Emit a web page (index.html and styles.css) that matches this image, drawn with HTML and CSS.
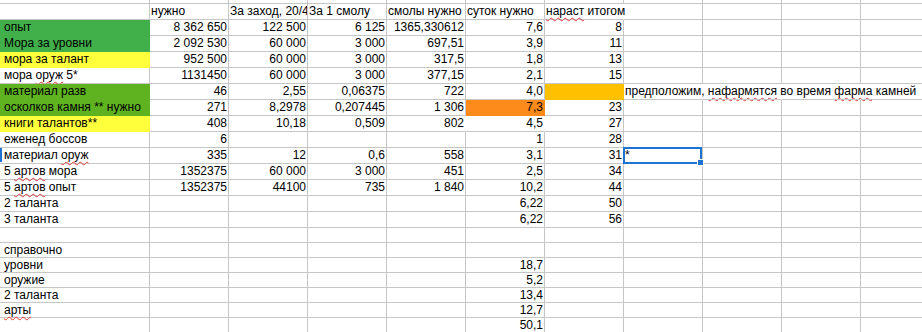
FILE: index.html
```html
<!DOCTYPE html>
<html lang="ru">
<head>
<meta charset="utf-8">
<title>Лист</title>
<link rel="stylesheet" href="styles.css">
</head>
<body>
<div class="sheet">
  <div class="row r0"><div class="c"></div><div class="c"></div><div class="c"></div><div class="c"></div><div class="c"></div><div class="c"></div><div class="c"></div><div class="c"></div><div class="c"></div><div class="c"></div><div class="c"></div><div class="c"></div></div>
  <div class="row"><div class="c a"></div><div class="c">нужно</div><div class="c clip">За заход, 20/40 смолы</div><div class="c">За 1 смолу</div><div class="c">смолы нужно</div><div class="c">суток нужно</div><div class="c nr"><span class="sp">нараст</span> итогом</div><div class="c"></div><div class="c"></div><div class="c"></div><div class="c"></div><div class="c"></div></div>
  <div class="row"><div class="c a g1">опыт</div><div class="c n">8 362 650</div><div class="c n">122 500</div><div class="c n">6 125</div><div class="c n">1365,330612</div><div class="c n">7,6</div><div class="c n">8</div><div class="c"></div><div class="c"></div><div class="c"></div><div class="c"></div><div class="c"></div></div>
  <div class="row"><div class="c a g1">Мора за уровни</div><div class="c n">2 092 530</div><div class="c n">60 000</div><div class="c n">3 000</div><div class="c n">697,51</div><div class="c n">3,9</div><div class="c n">11</div><div class="c"></div><div class="c"></div><div class="c"></div><div class="c"></div><div class="c"></div></div>
  <div class="row"><div class="c a y">мора за талант</div><div class="c n">952 500</div><div class="c n">60 000</div><div class="c n">3 000</div><div class="c n">317,5</div><div class="c n">1,8</div><div class="c n">13</div><div class="c"></div><div class="c"></div><div class="c"></div><div class="c"></div><div class="c"></div></div>
  <div class="row"><div class="c a">мора <span class="sp">оруж</span> 5*</div><div class="c n">1131450</div><div class="c n">60 000</div><div class="c n">3 000</div><div class="c n">377,15</div><div class="c n">2,1</div><div class="c n">15</div><div class="c"></div><div class="c"></div><div class="c"></div><div class="c"></div><div class="c"></div></div>
  <div class="row"><div class="c a g2">материал разв</div><div class="c n">46</div><div class="c n">2,55</div><div class="c n">0,06375</div><div class="c n">722</div><div class="c n">4,0</div><div class="c gold"></div><div class="c nr">предположим, <span class="sp">нафармятся</span> во время <span class="sp">фарма</span> камней</div><div class="c nr"></div><div class="c nr"></div><div class="c"></div><div class="c"></div></div>
  <div class="row"><div class="c a g2">осколков камня ** нужно</div><div class="c n">271</div><div class="c n">8,2978</div><div class="c n">0,207445</div><div class="c n">1 306</div><div class="c n or">7,3</div><div class="c n">23</div><div class="c"></div><div class="c"></div><div class="c"></div><div class="c"></div><div class="c"></div></div>
  <div class="row"><div class="c a y">книги талантов**</div><div class="c n">408</div><div class="c n">10,18</div><div class="c n">0,509</div><div class="c n wr">802</div><div class="c n wr">4,5</div><div class="c n">27</div><div class="c"></div><div class="c"></div><div class="c"></div><div class="c"></div><div class="c"></div></div>
  <div class="row"><div class="c a">еженед боссов</div><div class="c n">6</div><div class="c"></div><div class="c"></div><div class="c"></div><div class="c n">1</div><div class="c n">28</div><div class="c"></div><div class="c"></div><div class="c"></div><div class="c"></div><div class="c"></div></div>
  <div class="row"><div class="c a rowsel">материал <span class="sp">оруж</span></div><div class="c n">335</div><div class="c n">12</div><div class="c n">0,6</div><div class="c n">558</div><div class="c n">3,1</div><div class="c n">31</div><div class="c selcell">*<span class="sel"><span class="handle"></span></span></div><div class="c"></div><div class="c"></div><div class="c"></div><div class="c"></div></div>
  <div class="row"><div class="c a">5 <span class="sp">артов</span> мора</div><div class="c n">1352375</div><div class="c n">60 000</div><div class="c n">3 000</div><div class="c n">451</div><div class="c n">2,5</div><div class="c n">34</div><div class="c"></div><div class="c"></div><div class="c"></div><div class="c"></div><div class="c"></div></div>
  <div class="row"><div class="c a">5 <span class="sp">артов</span> опыт</div><div class="c n">1352375</div><div class="c n">44100</div><div class="c n">735</div><div class="c n">1 840</div><div class="c n">10,2</div><div class="c n">44</div><div class="c"></div><div class="c"></div><div class="c"></div><div class="c"></div><div class="c"></div></div>
  <div class="row"><div class="c a">2 таланта</div><div class="c"></div><div class="c"></div><div class="c"></div><div class="c"></div><div class="c n">6,22</div><div class="c n">50</div><div class="c"></div><div class="c"></div><div class="c"></div><div class="c"></div><div class="c"></div></div>
  <div class="row"><div class="c a">3 таланта</div><div class="c"></div><div class="c"></div><div class="c"></div><div class="c"></div><div class="c n">6,22</div><div class="c n">56</div><div class="c"></div><div class="c"></div><div class="c"></div><div class="c"></div><div class="c"></div></div>
  <div class="row s"><div class="c a"></div><div class="c"></div><div class="c"></div><div class="c"></div><div class="c"></div><div class="c"></div><div class="c"></div><div class="c"></div><div class="c"></div><div class="c"></div><div class="c"></div><div class="c"></div></div>
  <div class="row s"><div class="c a">справочно</div><div class="c"></div><div class="c"></div><div class="c"></div><div class="c"></div><div class="c"></div><div class="c"></div><div class="c"></div><div class="c"></div><div class="c"></div><div class="c"></div><div class="c"></div></div>
  <div class="row s"><div class="c a">уровни</div><div class="c"></div><div class="c"></div><div class="c"></div><div class="c"></div><div class="c n">18,7</div><div class="c"></div><div class="c"></div><div class="c"></div><div class="c"></div><div class="c"></div><div class="c"></div></div>
  <div class="row s"><div class="c a">оружие</div><div class="c"></div><div class="c"></div><div class="c"></div><div class="c"></div><div class="c n">5,2</div><div class="c"></div><div class="c"></div><div class="c"></div><div class="c"></div><div class="c"></div><div class="c"></div></div>
  <div class="row s"><div class="c a">2 таланта</div><div class="c"></div><div class="c"></div><div class="c"></div><div class="c"></div><div class="c n">13,4</div><div class="c"></div><div class="c"></div><div class="c"></div><div class="c"></div><div class="c"></div><div class="c"></div></div>
  <div class="row s"><div class="c a"><span class="sp">арты</span></div><div class="c"></div><div class="c"></div><div class="c"></div><div class="c"></div><div class="c n">12,7</div><div class="c"></div><div class="c"></div><div class="c"></div><div class="c"></div><div class="c"></div><div class="c"></div></div>
  <div class="row s"><div class="c a"></div><div class="c"></div><div class="c"></div><div class="c"></div><div class="c"></div><div class="c n">50,1</div><div class="c"></div><div class="c"></div><div class="c"></div><div class="c"></div><div class="c"></div><div class="c"></div></div>
</div>
</body>
</html>
```
FILE: styles.css
```css
html, body {
  margin: 0;
  padding: 0;
  background: #ffffff;
}
body {
  width: 922px;
  height: 332px;
  overflow: hidden;
  font-family: "Liberation Sans", Arial, sans-serif;
  font-size: 12px;
  color: #000000;
}
.sheet {
  width: 1020px;
}
.row {
  display: grid;
  grid-template-columns: 150px repeat(11, 79px);
  height: 16px;
}
.row.r0 {
  height: 4px;
}
.row.s {
  height: 15px;
}
.c {
  box-sizing: border-box;
  border-right: 1px solid #c6c6c6;
  border-bottom: 1px solid #c6c6c6;
  padding: 0 1px;
  line-height: 15px;
  white-space: nowrap;
  min-width: 0;
}
.row.s .c {
  line-height: 14px;
}
.a {
  padding-left: 4px;
}
.n {
  text-align: right;
}
.clip {
  overflow: hidden;
  padding-right: 0;
}
.nr {
  border-right-color: transparent;
}
.wr {
  border-right-color: #ffffff;
}
.g1 {
  background: #42b04a;
  border-color: #42b04a;
}
.g2 {
  background: #5fb320;
  border-color: #5fb320;
}
.y {
  background: #ffff3c;
  border-color: #ffff3c;
}
.gold {
  background: #ffc000;
  border-color: #ffc000;
}
.or {
  background: #fd8b1c;
  border-color: #fd8b1c;
}
.sp {
  text-decoration: underline wavy #e23b3b;
  text-decoration-thickness: 1px;
  text-underline-offset: 2px;
  text-decoration-skip-ink: none;
}
.rowsel {
  position: relative;
}
.rowsel::before {
  content: "";
  position: absolute;
  left: 0;
  top: 0;
  width: 2px;
  height: 14px;
  background: #1e73d2;
}
.selcell {
  position: relative;
}
.sel {
  position: absolute;
  left: -1px;
  top: -1px;
  width: 79px;
  height: 17px;
  box-sizing: border-box;
  border: 2px solid #1e73d2;
}
.handle {
  position: absolute;
  right: -4px;
  bottom: -4px;
  width: 5px;
  height: 5px;
  background: #1e73d2;
  border: 1px solid #ffffff;
  box-sizing: content-box;
}
```
